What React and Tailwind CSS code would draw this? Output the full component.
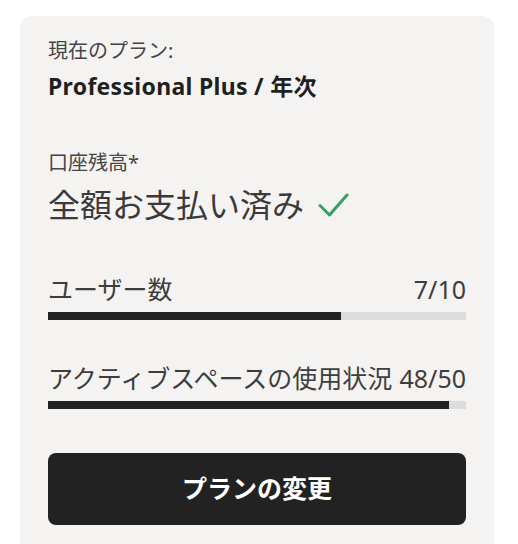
import React from 'react';

const font = { fontFamily: '"Noto Sans", "Noto Sans CJK JP", sans-serif' };

const UsageRow = ({ label, used, total, className }) => {
  const pct = (used / total) * 100;
  return (
    <div className={className}>
      <div className="flex items-center justify-between text-[25px] leading-[32px] text-[#3d3d3d]">
        <span>{label}</span>
        <span>
          {used}/{total}
        </span>
      </div>
      <div className="mt-[7px] h-[8px] w-full bg-[#dcdcdc]">
        <div className="h-full bg-[#222222]" style={{ width: `${pct}%` }} />
      </div>
    </div>
  );
};

const App = () => {
  return (
    <div className="min-h-screen bg-white pt-[16px]" style={font}>
      <div className="mx-[20px] w-[474px] rounded-[12px] bg-[#f4f3f1] px-[28px] pb-[28px] pt-[21px]">
        <div className="text-[20px] leading-[28px] text-[#454545]">現在のプラン:</div>
        <div className="mt-[7px] text-[23px] font-bold leading-[28px] tracking-[0.3px] text-[#1f1f1f]">
          Professional Plus / 年次
        </div>

        <div className="mt-[49px] text-[20px] leading-[28px] text-[#454545]">口座残高*</div>
        <div className="mt-[8px] flex items-center text-[32px] leading-[40px] text-[#3a3a3a]">
          <span>全額お支払い済み</span>
          <svg
            className="ml-[14px]"
            width="31"
            height="24"
            viewBox="0 0 31 24"
            fill="none"
            stroke="#3b9c68"
            strokeWidth="3"
            strokeLinecap="round"
            strokeLinejoin="round"
          >
            <path d="M2 12.5 L11.5 22 L29 2" />
          </svg>
        </div>

        <UsageRow className="mt-[48px]" label="ユーザー数" used={7} total={10} />
        <UsageRow className="mt-[42px]" label="アクティブスペースの使用状況" used={48} total={50} />

        <button className="mt-[44px] flex h-[72px] w-full items-center justify-center rounded-[8px] bg-[#222222] text-[25px] font-bold text-white">
          プランの変更
        </button>
      </div>
    </div>
  );
};

export default App;
